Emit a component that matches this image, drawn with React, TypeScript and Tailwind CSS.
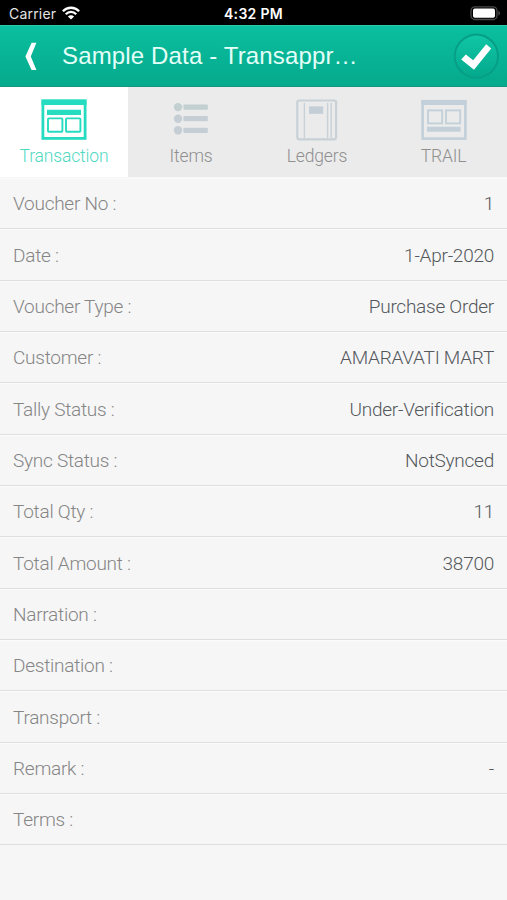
import React from "react";

type Row = { label: string; value?: string };

const rows: Row[] = [
  { label: "Voucher No :", value: "1" },
  { label: "Date :", value: "1-Apr-2020" },
  { label: "Voucher Type :", value: "Purchase Order" },
  { label: "Customer :", value: "AMARAVATI MART" },
  { label: "Tally Status :", value: "Under-Verification" },
  { label: "Sync Status :", value: "NotSynced" },
  { label: "Total Qty :", value: "11" },
  { label: "Total Amount :", value: "38700" },
  { label: "Narration :" },
  { label: "Destination :" },
  { label: "Transport :" },
  { label: "Remark :", value: "-" },
  { label: "Terms :" },
];

function WifiIcon() {
  return (
    <svg width="18" height="14" viewBox="0 0 18 14" fill="none" stroke="#fff" strokeWidth="2.3">
      <path d="M0.9 5.2C5.4 0.6 12.6 0.6 17.1 5.2" />
      <path d="M3.8 8.2C6.7 5.2 11.3 5.2 14.2 8.2" />
      <path d="M9 13.6L5.9 10.4C7.6 8.8 10.4 8.8 12.1 10.4Z" fill="#fff" stroke="none" />
    </svg>
  );
}

function BatteryIcon() {
  return (
    <svg width="31" height="15" viewBox="0 0 31 15">
      <rect x="1" y="0.9" width="26" height="12.6" rx="3.8" fill="#000" stroke="#4a4a4c" strokeWidth="1.3" />
      <rect x="3" y="2.6" width="22" height="9.2" rx="1.8" fill="#fff" />
      <path d="M28.4 4.8C30.6 5.6 30.6 8.8 28.4 9.6Z" fill="#4a4a4c" />
    </svg>
  );
}

function CheckButton() {
  return (
    <svg width="48" height="48" viewBox="0 0 48 48">
      <defs>
        <linearGradient id="check-fill" x1="0" y1="0" x2="0" y2="1">
          <stop offset="0" stopColor="#0fc6a5" />
          <stop offset="1" stopColor="#04a98c" />
        </linearGradient>
      </defs>
      <circle cx="23.4" cy="24.2" r="22.6" fill="#069f86" />
      <circle cx="23.4" cy="24.2" r="20.6" fill="url(#check-fill)" />
      <path d="M8.2 27.4L12.8 22.4L20.2 28.2L33.2 12.2L38.2 16.6L21 37.8Z" fill="#fff" />
    </svg>
  );
}

function TransactionIcon() {
  return (
    <svg width="46" height="42" viewBox="0 0 46 42" fill="none" stroke="#26dcc0">
      <rect x="1.9" y="2" width="42.2" height="37.4" strokeWidth="2.8" />
      <path d="M0.5 3.2H45.5" strokeWidth="5.4" />
      <path d="M6 13.4H40" strokeWidth="5.4" />
      <rect x="7" y="19.4" width="14.4" height="13.4" rx="0.8" strokeWidth="1.9" />
      <rect x="25" y="19.4" width="14.4" height="13.4" rx="0.8" strokeWidth="1.9" />
    </svg>
  );
}

function ItemsIcon() {
  return (
    <svg width="37" height="36" viewBox="0 0 37 36" fill="#c5ced5">
      <circle cx="5" cy="5.1" r="4.2" fill="#c3d0d1" />
      <rect x="10.4" y="2.5" width="24.4" height="5.2" rx="0.8" fill="#c3d0d1" />
      <circle cx="5" cy="16.7" r="4.2" />
      <rect x="10.4" y="14.1" width="24.4" height="5.2" rx="0.8" />
      <circle cx="5" cy="28.3" r="4.2" />
      <rect x="10.4" y="25.7" width="24.4" height="5.2" rx="0.8" />
    </svg>
  );
}

function LedgersIcon() {
  return (
    <svg width="42" height="42" viewBox="0 0 42 42" fill="none" stroke="#c7d1d7">
      <rect x="1.3" y="1.5" width="38.8" height="38.8" rx="2" strokeWidth="2.2" />
      <path d="M8.4 4V39M31.6 4V39M35.2 4V39" strokeWidth="1.4" />
      <rect x="13" y="7.4" width="14.2" height="7.4" fill="#c3ced6" stroke="none" />
    </svg>
  );
}

function TrailIcon() {
  return (
    <svg width="46" height="42" viewBox="0 0 46 42" fill="none" stroke="#c3d0da">
      <rect x="1.6" y="2.2" width="42.8" height="37.4" strokeWidth="2.6" />
      <path d="M0.4 3.6H45.6" strokeWidth="5" />
      <rect x="7" y="11.4" width="14.2" height="13" strokeWidth="1.9" />
      <rect x="25" y="11.4" width="14.2" height="13" strokeWidth="1.9" />
      <path d="M6 30.2H39.6" strokeWidth="5" />
    </svg>
  );
}

const tabs = [
  { label: "Transaction", icon: <TransactionIcon /> },
  { label: "Items", icon: <ItemsIcon /> },
  { label: "Ledgers", icon: <LedgersIcon /> },
  { label: "TRAIL", icon: <TrailIcon /> },
];

export default function App() {
  return (
    <div className="flex h-[900px] w-[507px] flex-col overflow-hidden bg-[#f6f6f6] font-[Roboto,sans-serif]">
      <div className="grid h-[25px] shrink-0 grid-cols-3 items-center bg-black pt-[2px] font-[Inter,sans-serif] text-white">
        <div className="flex items-center gap-[6px] pl-[9px]">
          <span className="text-[14px] leading-none tracking-[0.2px] text-[#e4e4e4]">Carrier</span>
          <span className="-mt-px">
            <WifiIcon />
          </span>
        </div>
        <span className="text-center text-[14px] leading-none font-semibold tracking-[0.3px]">4:32 PM</span>
        <div className="flex justify-end pr-[6px]">
          <BatteryIcon />
        </div>
      </div>

      <header className="flex h-[62px] shrink-0 items-center border-t border-b border-t-[#2fc9ae] border-b-[#129780] bg-linear-to-b from-[#0abf9f] to-[#06a98c] pr-[6px] pl-[24px]">
        <svg width="14" height="30" viewBox="0 0 14 30" fill="#fff">
          <path d="M7.6 1.8H12.4L6.8 15.4L12.4 29H7.6L1.4 15.4Z" />
        </svg>
        <h1 className="ml-[24px] flex-1 font-['Liberation_Sans',sans-serif] text-[24px] leading-none tracking-[0.15px] whitespace-nowrap text-[#e3fff8]">
          Sample Data - Transappr…
        </h1>
        <CheckButton />
      </header>

      <nav className="grid h-[90px] shrink-0 grid-cols-[128px_126px_126px_127px] bg-[#ebebeb]">
        {tabs.map((tab, i) => (
          <button
            key={tab.label}
            className={
              i === 0
                ? "flex flex-col items-center bg-white pt-[11px] text-[#4fd9c2]"
                : "flex flex-col items-center pt-[11px] text-[#8f8f8f]"
            }
          >
            <span className="flex h-[44px] items-center">{tab.icon}</span>
            <span className="mt-auto mb-[10px] text-[17.5px] leading-[22px] font-light tracking-[-0.15px]">{tab.label}</span>
          </button>
        ))}
      </nav>

      <main className="flex flex-col pt-px">
        {rows.map((row) => (
          <div
            key={row.label}
            className="flex h-[51.33px] items-center justify-between border-t border-b border-t-[#fbfbfb] border-b-[#dfdfdf] px-[13px] pt-[2px] text-[19px] font-light tracking-[-0.25px]"
          >
            <span className="text-[#858585]">{row.label}</span>
            <span className="text-[#54585c]">{row.value}</span>
          </div>
        ))}
      </main>
    </div>
  );
}
